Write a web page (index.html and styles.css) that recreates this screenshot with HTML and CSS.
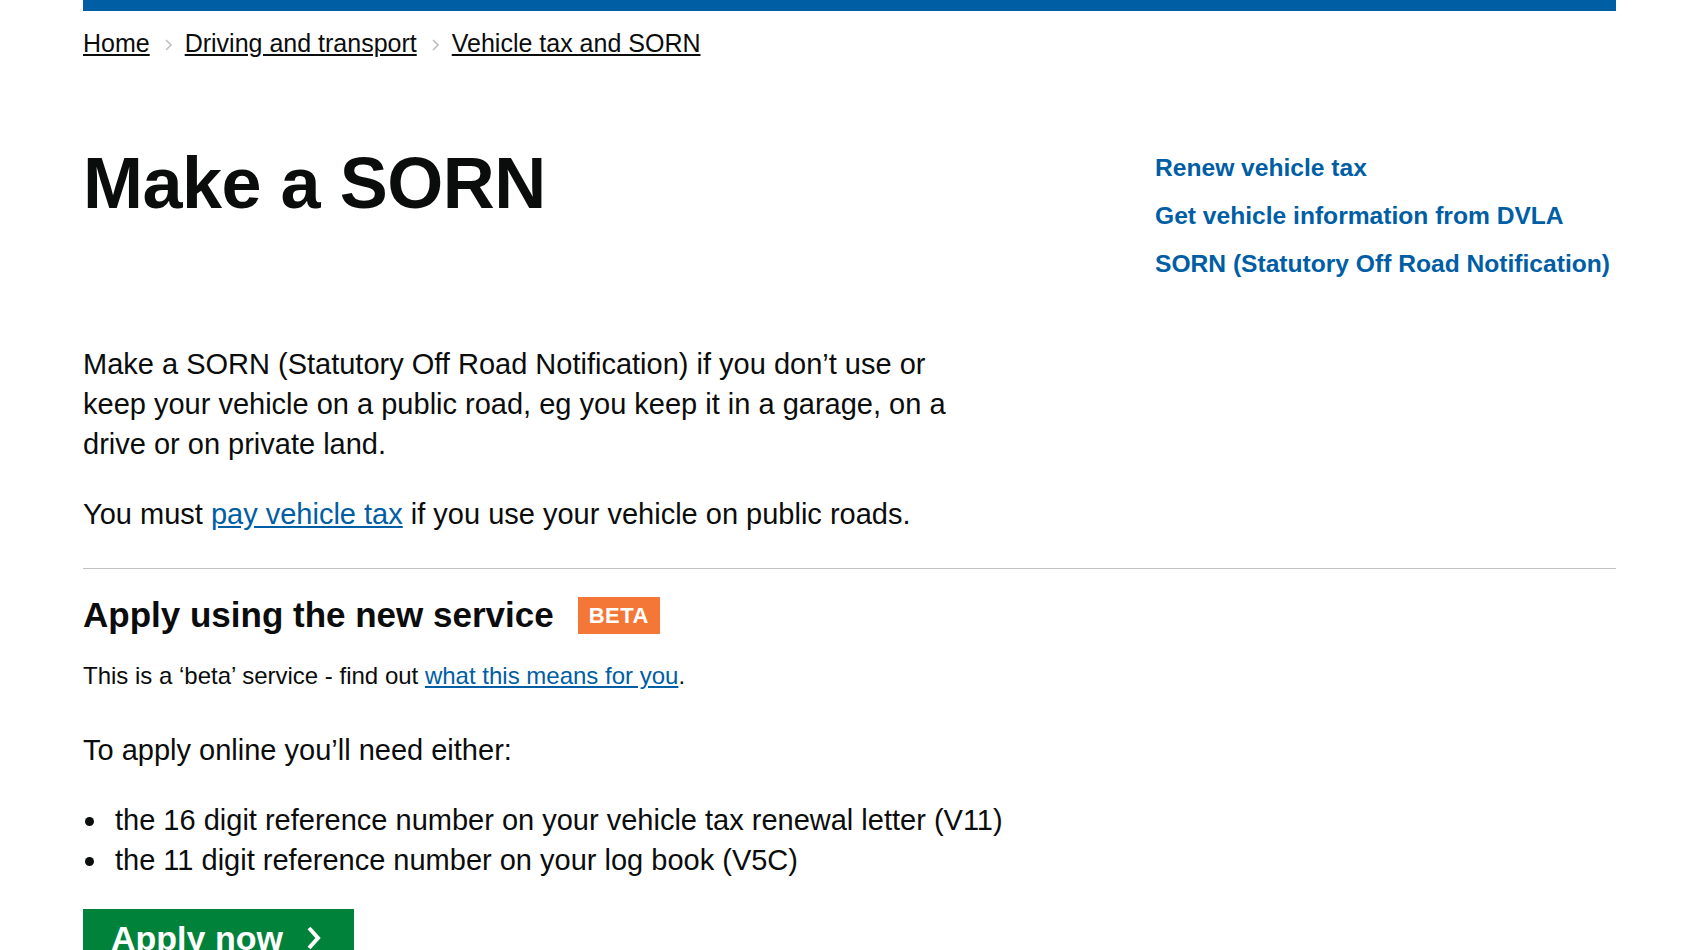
FILE: index.html
```html
<!DOCTYPE html>
<html lang="en">
<head>
<meta charset="utf-8">
<title>Make a SORN - GOV.UK</title>
<link rel="stylesheet" href="styles.css">
</head>
<body>
<div class="page">
  <div class="topbar"></div>
  <nav class="breadcrumbs">
    <ol>
      <li><a href="#">Home</a></li>
      <li class="sep"><svg viewBox="0 0 7 12" width="7" height="12"><path d="M1 1l5 5-5 5" fill="none" stroke="#bfc1c3" stroke-width="1.6"/></svg></li>
      <li><a href="#">Driving and transport</a></li>
      <li class="sep"><svg viewBox="0 0 7 12" width="7" height="12"><path d="M1 1l5 5-5 5" fill="none" stroke="#bfc1c3" stroke-width="1.6"/></svg></li>
      <li><a href="#">Vehicle tax and SORN</a></li>
    </ol>
  </nav>

  <div class="header-row">
    <h1 class="title">Make a SORN</h1>
    <aside class="related">
      <ul>
        <li><a href="#">Renew vehicle tax</a></li>
        <li><a href="#">Get vehicle information from DVLA</a></li>
        <li><a href="#">SORN (Statutory Off Road Notification)</a></li>
      </ul>
    </aside>
  </div>

  <div class="content">
    <p class="body-text intro">Make a SORN (Statutory Off Road Notification) if you don’t use or keep your vehicle on a public road, eg you keep it in a garage, on a drive or on private land.</p>
    <p class="body-text must">You must <a href="#">pay vehicle tax</a> if you use your vehicle on public roads.</p>
    <hr class="rule">
    <h2 class="service-title">Apply using the new service <strong class="badge">BETA</strong></h2>
    <p class="small-text">This is a ‘beta’ service - find out <a href="#">what this means for you</a>.</p>
    <p class="body-text need">To apply online you’ll need either:</p>
    <ul class="bullets">
      <li>the 16 digit reference number on your vehicle tax renewal letter (V11)</li>
      <li>the 11 digit reference number on your log book (V5C)</li>
    </ul>
    <a class="button" href="#">Apply now<svg class="chev" viewBox="0 0 14 24" width="14" height="24"><path d="M2 2l9 10-9 10" fill="none" stroke="#fff" stroke-width="4"/></svg></a>
  </div>
</div>
</body>
</html>
```

FILE: styles.css
```css
html, body {
  margin: 0;
  padding: 0;
  background: #ffffff;
}

body {
  font-family: "Liberation Sans", Arial, sans-serif;
  color: #0b0c0c;
}

.page {
  padding: 0 74px 0 83px;
}

.topbar {
  height: 11px;
  background: #005ea5;
}

.breadcrumbs {
  margin-top: 17px;
}

.breadcrumbs ol {
  list-style: none;
  margin: 0;
  padding: 0;
  display: flex;
  align-items: center;
  font-size: 25px;
  line-height: 30px;
}

.breadcrumbs a {
  color: #0b0c0c;
  text-decoration: underline;
}

.breadcrumbs .sep {
  display: flex;
  align-items: center;
  margin: 4px 13px 0 15px;
}

.header-row {
  display: grid;
  grid-template-columns: 1fr 461px;
  margin-top: 84px;
}

.title {
  margin: 0;
  font-size: 72px;
  line-height: 82px;
  font-weight: 700;
  letter-spacing: -0.5px;
}

.related ul {
  list-style: none;
  margin: 0;
  padding: 2px 0 0;
}

.related li {
  line-height: 48px;
  font-size: 24.6px;
  font-weight: 700;
  white-space: nowrap;
}

.related a {
  color: #005ea5;
  text-decoration: none;
}

.content a {
  color: #005ea5;
}

.body-text {
  margin: 0;
  font-size: 29px;
  line-height: 40px;
}

.intro {
  margin-top: 56px;
  max-width: 890px;
}

.must {
  margin-top: 30px;
}

.rule {
  margin: 34px 0 0;
  border: 0;
  height: 0;
  border-top: 1px solid #bfc1c3;
}

.service-title {
  margin: 24px 0 0;
  display: flex;
  align-items: center;
  height: 44px;
  font-size: 35px;
  font-weight: 700;
}

.badge {
  margin-left: 24px;
  background: #f47738;
  color: #ffffff;
  font-size: 22px;
  height: 37px;
  line-height: 38px;
  padding: 0 11px;
  letter-spacing: 0.5px;
}

.small-text {
  margin: 24px 0 0;
  font-size: 24px;
  line-height: 30px;
}

.need {
  margin-top: 39px;
}

.bullets {
  margin: 30px 0 0;
  padding-left: 26px;
  font-size: 29px;
  line-height: 40px;
}

.bullets li {
  padding-left: 6px;
}

.button {
  margin-top: 29px;
  display: inline-flex;
  align-items: center;
  background: #00823b;
  color: #ffffff !important;
  text-decoration: none;
  font-size: 34px;
  font-weight: 700;
  line-height: 42px;
  padding: 8px 33px 8px 28px;
  box-shadow: 0 2px 0 #003618;
}

.chev {
  margin-left: 24px;
}
```
